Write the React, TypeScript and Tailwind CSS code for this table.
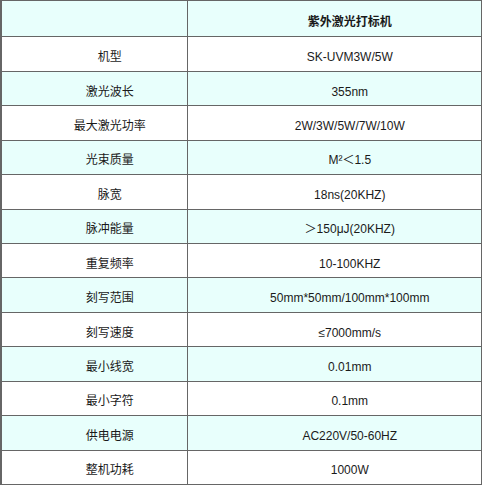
import React from 'react';

const rows: [string, string][] = [
  ['机型', 'SK-UVM3W/5W'],
  ['激光波长', '355nm'],
  ['最大激光功率', '2W/3W/5W/7W/10W'],
  ['光束质量', 'M²＜1.5'],
  ['脉宽', '18ns(20KHZ)'],
  ['脉冲能量', '＞150μJ(20KHZ)'],
  ['重复频率', '10-100KHZ'],
  ['刻写范围', '50mm*50mm/100mm*100mm'],
  ['刻写速度', '≤7000mm/s'],
  ['最小线宽', '0.01mm'],
  ['最小字符', '0.1mm'],
  ['供电电源', 'AC220V/50-60HZ'],
  ['整机功耗', '1000W'],
];

const cell = 'border border-[#666666] text-center align-middle pl-[31px] pt-[6px] pb-0';

export default function App() {
  return (
    <div
      className="w-[483px] h-[486px] bg-white text-[12px] text-[#1a1a1a] leading-none"
      style={{ fontFamily: '"Liberation Sans", Arial, "Noto Sans CJK SC", sans-serif' }}
    >
      <table className="w-[482px] h-[485px] table-fixed border-collapse">
        <colgroup>
          <col className="w-[186px]" />
          <col />
        </colgroup>
        <tbody>
          <tr className="h-[36px] bg-[#e8fffc]">
            <td className={`${cell} border-l-2`}></td>
            <td className={`${cell} font-bold`}>紫外激光打标机</td>
          </tr>
          {rows.map(([k, v], i) => (
            <tr key={k} className={i % 2 === 0 ? 'h-[34px] bg-white' : 'h-[34px] bg-[#e8fffc]'}>
              <td className={`${cell} border-l-2`}>{k}</td>
              <td className={cell}>{v}</td>
            </tr>
          ))}
        </tbody>
      </table>
    </div>
  );
}
